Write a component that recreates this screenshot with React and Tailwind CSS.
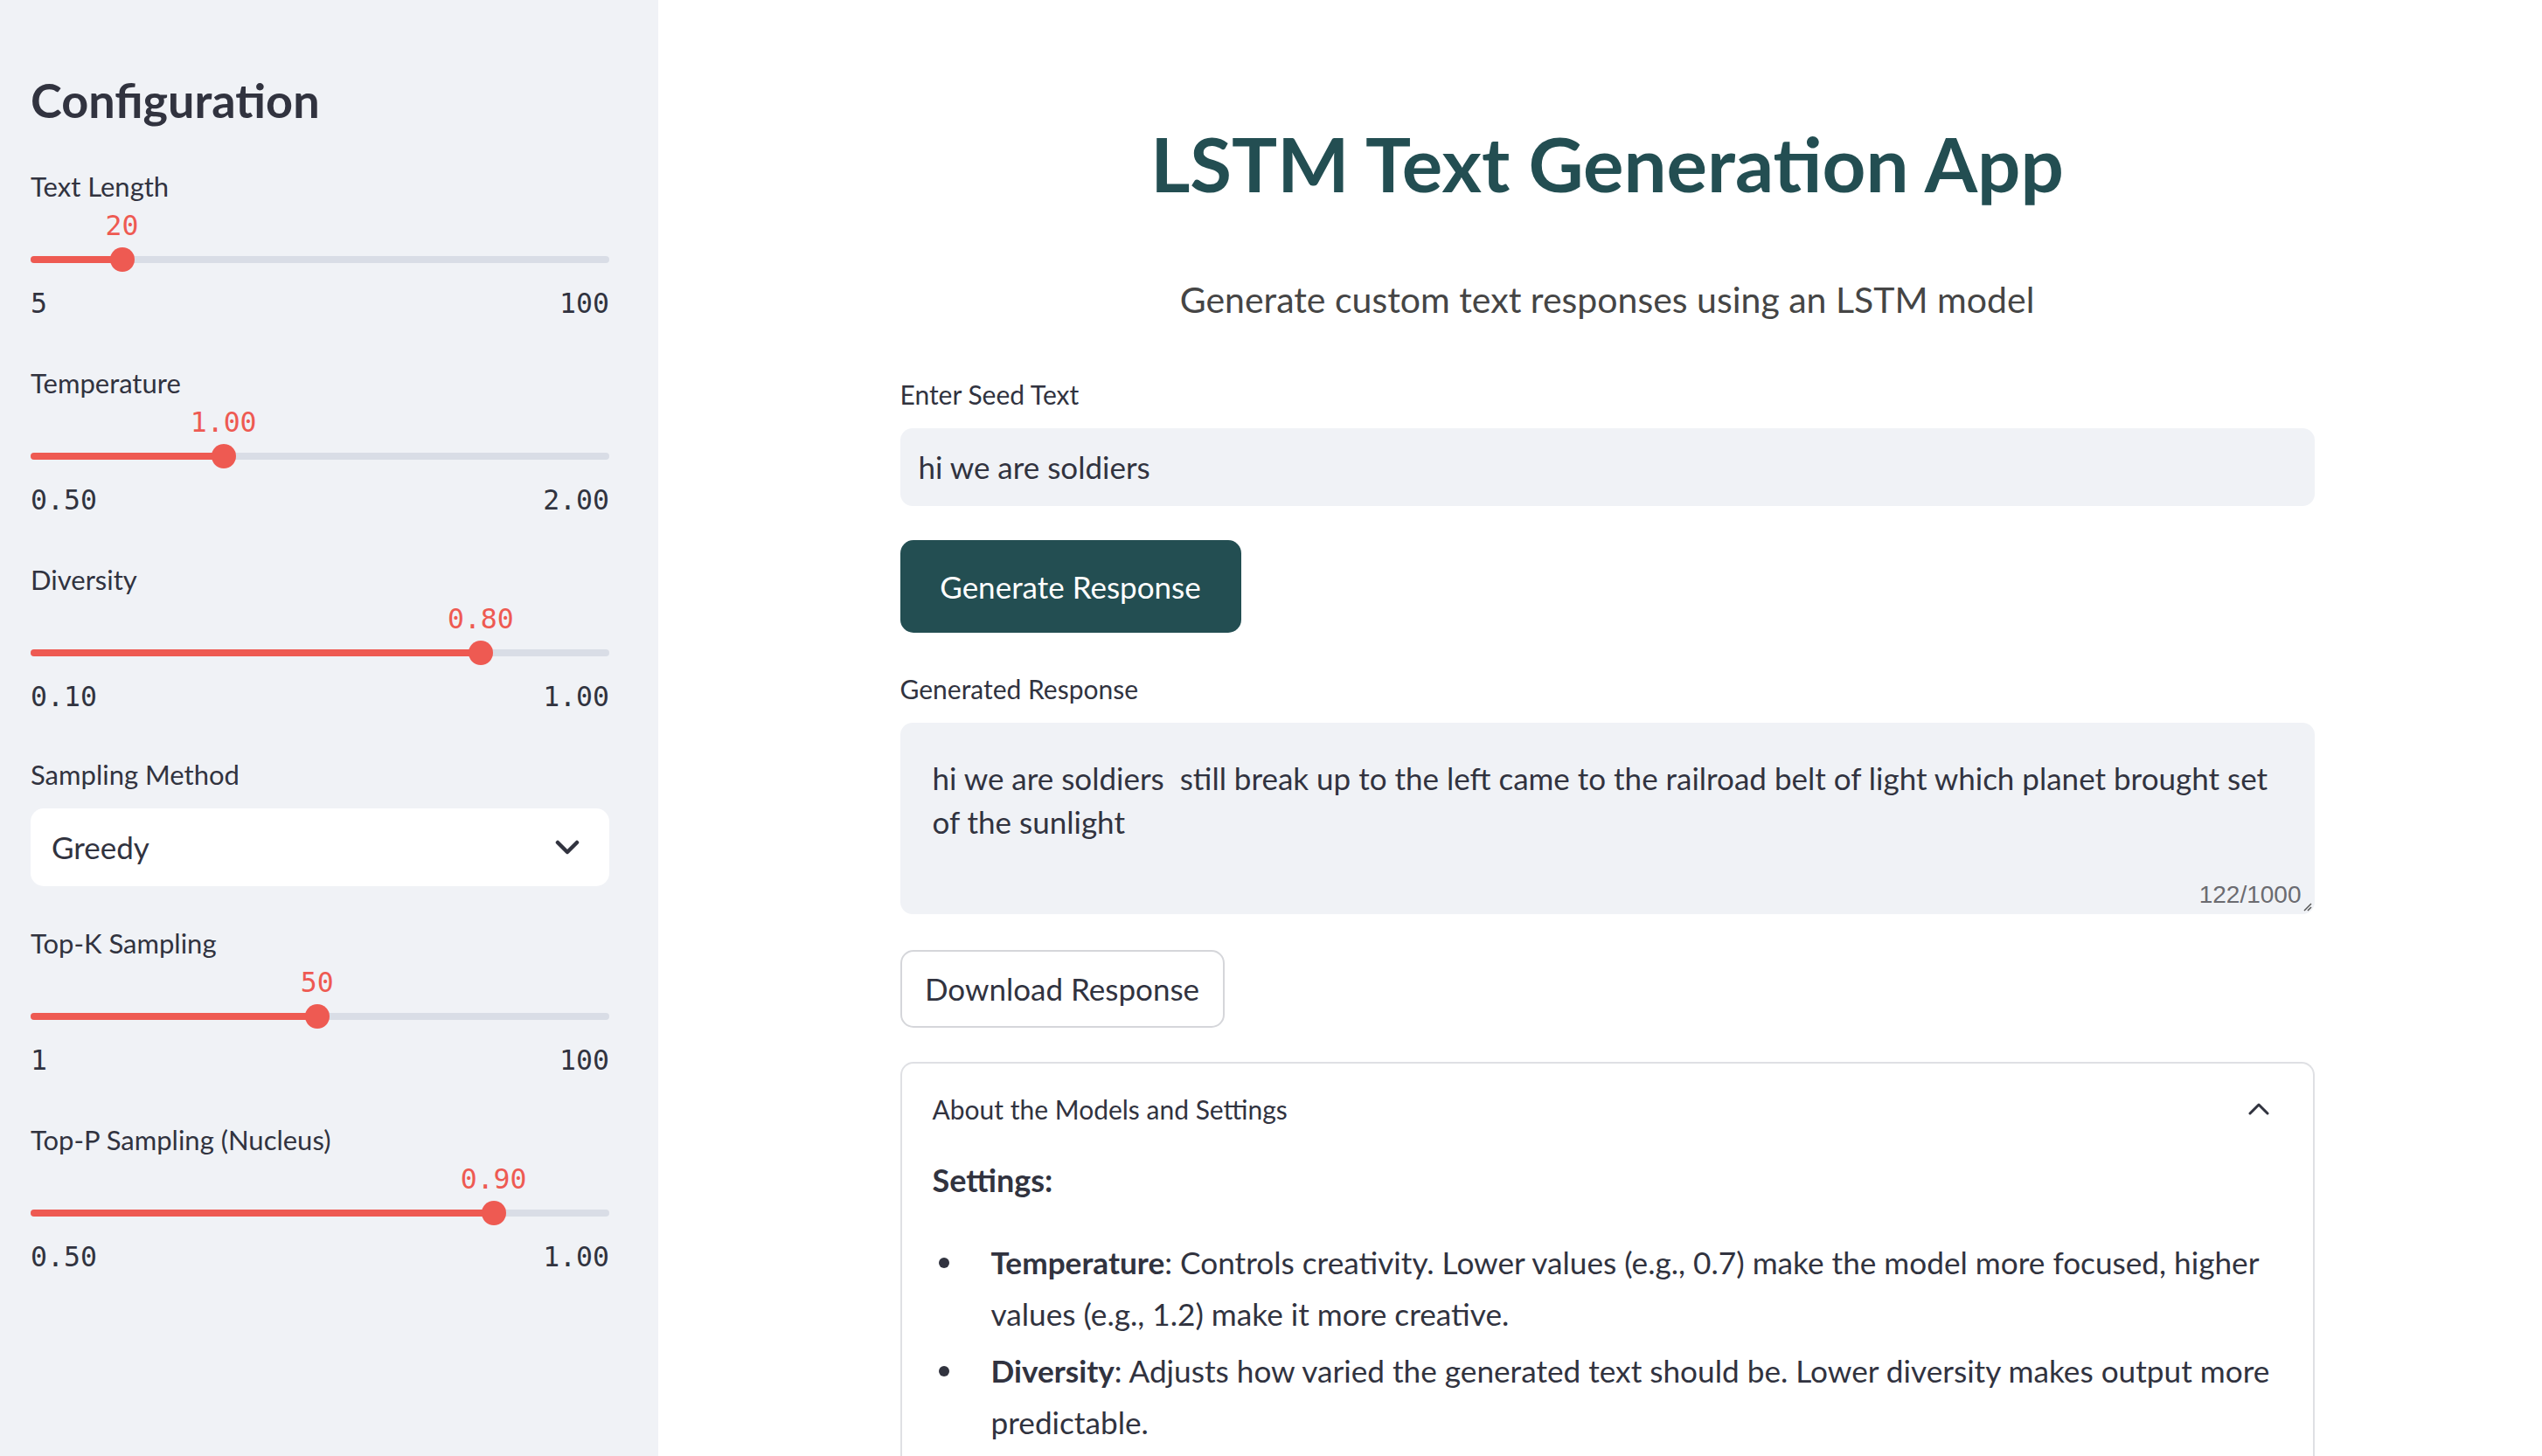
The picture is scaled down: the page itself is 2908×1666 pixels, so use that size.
import React from "react";

const SANS = { fontFamily: "Lato, 'Noto Sans', sans-serif" };
const MONO = { fontFamily: "'DejaVu Sans Mono', 'Liberation Mono', monospace" };

function Slider({ label, value, min, max, pct }) {
  return (
    <div>
      <div className="h-[40px] leading-[40px] text-[31px] text-[#31333f]">{label}</div>
      <div className="relative mt-[5px] h-[40px]">
        <span
          className="absolute top-0 -translate-x-1/2 text-[31.5px] leading-[40px] text-[#ee5a52]"
          style={{ ...MONO, left: `${pct}%` }}
        >
          {value}
        </span>
      </div>
      <div className="relative h-[38px]">
        <div className="absolute left-0 right-0 top-[15px] h-[8px] rounded-full bg-[#d9dde6]" />
        <div
          className="absolute left-0 top-[15px] h-[8px] rounded-full bg-[#ee5a52]"
          style={{ width: `${pct}%` }}
        />
        <div
          className="absolute top-[5px] h-[28px] w-[28px] -translate-x-1/2 rounded-full bg-[#ee5a52]"
          style={{ left: `${pct}%` }}
        />
      </div>
      <div
        className="mt-[12px] flex h-[40px] items-center justify-between text-[31.5px] text-[#31333f]"
        style={MONO}
      >
        <span>{min}</span>
        <span>{max}</span>
      </div>
    </div>
  );
}

export default function App() {
  return (
    <div className="flex h-[1666px] w-[2908px] overflow-hidden bg-white" style={SANS}>
      <aside className="w-[753px] shrink-0 bg-[#f0f2f6] pl-[35px] pr-[56px] pt-[80px]">
        <h2 className="h-[70px] text-[54px] font-bold leading-[70px] text-[#31333f]">Configuration</h2>
        <div className="mt-[43px]">
          <Slider label="Text Length" value="20" min="5" max="100" pct={(15 / 95) * 100} />
        </div>
        <div className="mt-[50px]">
          <Slider label="Temperature" value="1.00" min="0.50" max="2.00" pct={(0.5 / 1.5) * 100} />
        </div>
        <div className="mt-[50px]">
          <Slider label="Diversity" value="0.80" min="0.10" max="1.00" pct={(0.7 / 0.9) * 100} />
        </div>
        <div className="mt-[48px] h-[40px] leading-[40px] text-[31px] text-[#31333f]">Sampling Method</div>
        <div className="mt-[19px] flex h-[89px] items-center justify-between rounded-[15px] bg-white pl-[24px] pr-[34px]">
          <span className="text-[35px] text-[#31333f]">Greedy</span>
          <svg width="28" height="18" viewBox="0 0 28 18" fill="none">
            <path d="M3 3 L14 14 L25 3" stroke="#31333f" strokeWidth="4.5" strokeLinecap="round" strokeLinejoin="round" />
          </svg>
        </div>
        <div className="mt-[45px]">
          <Slider label="Top-K Sampling" value="50" min="1" max="100" pct={(49 / 99) * 100} />
        </div>
        <div className="mt-[50px]">
          <Slider label="Top-P Sampling (Nucleus)" value="0.90" min="0.50" max="1.00" pct={80} />
        </div>
      </aside>

      <main className="flex flex-1 justify-center pl-[16px]">
        <div className="w-[1618px] shrink-0 pt-[127px]">
          <h1 className="h-[120px] text-center text-[87px] font-bold leading-[120px] text-[#234e52]">
            LSTM Text Generation App
          </h1>
          <p className="mt-[71px] h-[50px] text-center text-[41px] leading-[50px] text-[#454545]">
            Generate custom text responses using an LSTM model
          </p>
          <div className="mt-[63px] h-[40px] text-[30px] leading-[40px] text-[#31333f]">Enter Seed Text</div>
          <div className="mt-[19px] flex h-[89px] items-center rounded-[14px] bg-[#f0f2f6] pl-[21px] text-[35px] text-[#31333f]">
            hi we are soldiers
          </div>
          <div className="mt-[39px]">
            <button className="h-[106px] w-[390px] rounded-[15px] bg-[#234e52] text-[35px] text-white">
              Generate Response
            </button>
          </div>
          <div className="mt-[44px] h-[40px] text-[30px] leading-[40px] text-[#31333f]">Generated Response</div>
          <div className="relative mt-[19px] h-[219px] rounded-[14px] bg-[#f0f2f6] pl-[37px] pr-[30px] pt-[38px] text-[35px] leading-[50px] text-[#31333f]">
            hi we are soldiers&nbsp; still break up to the left came to the railroad belt of light which planet brought set of the sunlight
            <span
              className="absolute bottom-[10px] right-[15px] text-[28px] leading-[24px] text-[#6b6b70]"
              style={{ fontFamily: "'Liberation Sans', Arial, sans-serif" }}
            >
              122/1000
            </span>
            <svg className="absolute bottom-[3px] right-[3px]" width="12" height="12" viewBox="0 0 12 12">
              <path d="M11 3 L3 11 M11 7 L7 11" stroke="#555" strokeWidth="1.5" />
            </svg>
          </div>
          <div className="mt-[41px]">
            <button className="h-[89px] w-[371px] rounded-[15px] border-2 border-[#d5d6da] bg-white text-[35px] text-[#31333f]">
              Download Response
            </button>
          </div>
          <div className="mt-[39px] h-[600px] rounded-t-[15px] border-2 border-b-0 border-[#dfe0e4]">
            <div className="flex h-[104px] items-center justify-between pl-[35px] pr-[50px]">
              <span className="text-[30px] text-[#31333f]">About the Models and Settings</span>
              <svg width="24" height="14" viewBox="0 0 24 14" fill="none">
                <path d="M2 12 L12 2 L22 12" stroke="#31333f" strokeWidth="3" strokeLinecap="round" strokeLinejoin="round" />
              </svg>
            </div>
            <div className="pl-[35px] pr-[40px]">
              <div className="mt-[4px] h-[50px] text-[36px] font-bold leading-[50px] text-[#31333f]">Settings:</div>
              <ul className="mt-[40px] text-[35.2px] leading-[59px] text-[#31333f]">
                <li className="relative pl-[67px]">
                  <span className="absolute left-[7px] top-[24px] h-[12px] w-[12px] rounded-full bg-[#31333f]" />
                  <b>Temperature</b>: Controls creativity. Lower values (e.g., 0.7) make the model more focused, higher values (e.g., 1.2) make it more creative.
                </li>
                <li className="relative mt-[6px] pl-[67px]">
                  <span className="absolute left-[7px] top-[24px] h-[12px] w-[12px] rounded-full bg-[#31333f]" />
                  <b>Diversity</b>: Adjusts how varied the generated text should be. Lower diversity makes output more predictable.
                </li>
              </ul>
            </div>
          </div>
        </div>
      </main>
    </div>
  );
}
